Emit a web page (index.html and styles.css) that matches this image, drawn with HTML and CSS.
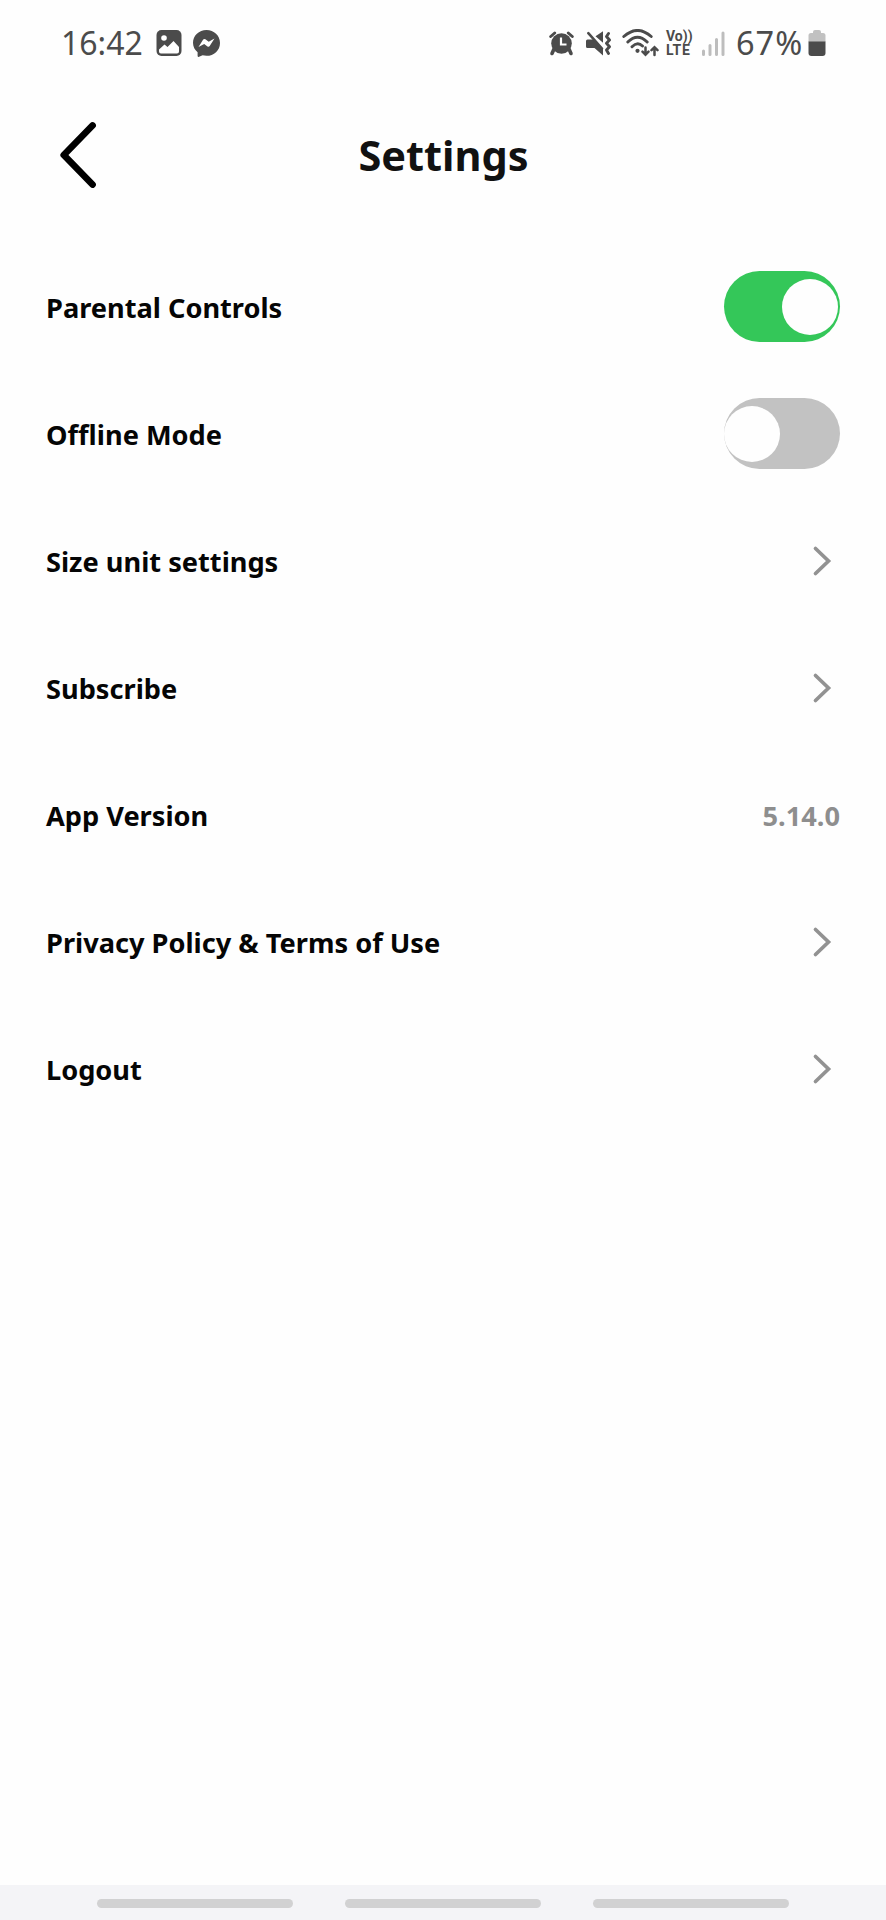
FILE: index.html
```html
<!DOCTYPE html>
<html lang="en">
<head>
<meta charset="utf-8">
<title>Settings</title>
<link rel="stylesheet" href="styles.css">
</head>
<body>
<div class="screen">
  <div class="status">
    <span class="clock">16:42</span>
    <svg class="ic-photo" width="26" height="26" viewBox="0 0 26 26"><rect x=".5" y="0" width="25" height="26" rx="5" fill="#4b4b4b"/><circle cx="8" cy="8" r="2.8" fill="#fff"/><path d="M3 19.500l5.500-5 3 2.500 6-6 5.500 6v4.500q0 2-2 2h-16q-2 0-2-2z" fill="#fff"/></svg>
    <svg class="ic-msg" width="27" height="27" viewBox="0 0 27 27"><path d="M13.500 0C6 0 0 5.500 0 12.800c0 4 1.800 7.200 4.600 9.500V26q.2 1.300 1.500.8l3.500-1.500c1.200.3 2.500.5 3.900.5C21 25.800 27 20.300 27 12.900S21 0 13.500 0z" fill="#4b4b4b"/><path d="M5.500 17l4.700-7.500q1-1 2.200-.3l3.300 2.600 5.800-3.300-4.800 7.500q-.9 1.200-2.200.4l-3.300-2.500z" fill="#fff"/></svg>
    <span class="spacer"></span>
    <svg class="ic-alarm" width="25" height="25" viewBox="0 0 25 25"><path d="M1.700 5.500l4-3.500M23.300 5.500l-4-3.500" stroke="#4b4b4b" stroke-width="2.900" stroke-linecap="round"/><circle cx="12.500" cy="12.500" r="10.300" fill="#4b4b4b"/><path d="M5 18l-2 4.500M20 18l2 4.500" stroke="#4b4b4b" stroke-width="3.600" stroke-linecap="round"/><path d="M12 6.500v7h5.500" fill="none" stroke="#fff" stroke-width="2.200"/></svg>
    <svg class="ic-mute" width="25" height="25" viewBox="0 0 25 25"><path d="M9.500 5.300L17 .3v11.500zM1.500 8.500H7.500L17 18v6.500L8.500 17H1.500Q0 17 0 15.500v-5.500q0-1.500 1.500-1.500z" fill="#4b4b4b"/><path d="M2.300 2.200L16 17.500" stroke="#4b4b4b" stroke-width="2.600" stroke-linecap="round"/><path d="M22.500 2.500l-2 3 3 3.500-3 3.200 3 3.500-3 3.300 2 3.500" fill="none" stroke="#4b4b4b" stroke-width="2.900" stroke-linecap="round" stroke-linejoin="round"/></svg>
    <svg class="ic-wifi" width="37" height="28" viewBox="0 0 37 28"><g fill="none" stroke="#4b4b4b" stroke-width="2.900" stroke-linecap="round"><path d="M1.800 7.500Q15.500-4.600 29.200 7.500M5.800 13Q15.500 3.500 25.200 13M10 17.800Q15.500 12.200 20.500 17"/><path d="M23.500 18.500v7M20.500 22.700l3 3 3-3M32.500 26v-7M29.500 21.200l3-3 3 3" stroke-width="2.500"/></g><circle cx="15.500" cy="21.800" r="2.100" fill="#4b4b4b"/></svg>
    <span class="volte"><span class="vo">Vo))</span><span class="lte">LTE</span></span>
    <svg class="ic-signal" width="23" height="25" viewBox="0 0 23 25"><path d="M1.500 20v3.500M8 14.500v9M14.500 8.500v15M21 2v21.500" stroke="#bdbdbd" stroke-width="3" stroke-linecap="round"/></svg>
    <span class="pct">67%</span>
    <svg class="ic-batt" width="18" height="26" viewBox="0 0 18 26"><path d="M5 2q0-2 2-2h4q2 0 2 2v1h2q2.500 0 2.500 2.500V12H.5V5.500Q.5 3 3 3h2z" fill="#c1c1c1"/><path d="M.5 11.500h17v11.500q0 3-3 3h-11q-3 0-3-3z" fill="#4b4b4b"/></svg>
  </div>
  <header class="header">
    <svg class="back" width="40" height="68" viewBox="0 0 40 68"><path d="M34.500 4.500L5.800 34 34.500 63.500" fill="none" stroke="#000" stroke-width="6.800" stroke-linecap="round" stroke-linejoin="round"/></svg>
    <h1 class="title">Settings</h1>
  </header>
  <main class="list">
    <div class="row"><span class="label">Parental Controls</span><span class="toggle on"><i class="knob"></i></span></div>
    <div class="row"><span class="label">Offline Mode</span><span class="toggle"><i class="knob"></i></span></div>
    <div class="row"><span class="label">Size unit settings</span><svg class="chev" width="20" height="32" viewBox="0 0 20 32"><path d="M3.500 3.500L16.500 16 3.500 28.500"/></svg></div>
    <div class="row"><span class="label">Subscribe</span><svg class="chev" width="20" height="32" viewBox="0 0 20 32"><path d="M3.500 3.500L16.500 16 3.500 28.500"/></svg></div>
    <div class="row"><span class="label">App Version</span><span class="label version">5.14.0</span></div>
    <div class="row"><span class="label">Privacy Policy &amp; Terms of Use</span><svg class="chev" width="20" height="32" viewBox="0 0 20 32"><path d="M3.500 3.500L16.500 16 3.500 28.500"/></svg></div>
    <div class="row"><span class="label">Logout</span><svg class="chev" width="20" height="32" viewBox="0 0 20 32"><path d="M3.500 3.500L16.500 16 3.500 28.500"/></svg></div>
  </main>
  <nav class="nav"><i class="pill"></i><i class="pill"></i><i class="pill"></i></nav>
</div>
</body>
</html>
```
FILE: styles.css
```css
* { box-sizing: border-box; }
body { margin: 0; background: #fefefe; font-family: "Noto Sans", sans-serif; color: #050505; }
.screen { width: 886px; height: 1920px; display: flex; flex-direction: column; }
.status { height: 86px; padding: 0 60px 0 61px; display: flex; align-items: center; color: #4b4b4b; flex: none; }
.status > * { flex-shrink: 0; }
.clock { font-size: 32px; line-height: 40px; width: 95px; letter-spacing: 0; }
.ic-msg { margin-left: 11px; }
.spacer { flex: 1; }
.ic-mute { margin-left: 12px; }
.ic-wifi { margin-left: 11px; }
.volte { display: flex; flex-direction: column; margin-left: 7px; width: 27px; font-family: Roboto, sans-serif; font-size: 14px; font-weight: 700; line-height: 14px; }
.lte { letter-spacing: 0.6px; }
.ic-signal { margin-left: 9px; }
.pct { font-size: 32.500px; line-height: 40px; width: 72px; margin-left: 11px; letter-spacing: 1px; }
.header { height: 157px; padding-left: 58px; display: grid; grid-template-columns: 40px 1fr 97px; align-items: start; flex: none; }
.back { margin-top: 35px; }
.title { margin: 35px 0 0; font-size: 41.500px; line-height: 68px; font-weight: 700; text-align: center; color: #111; }
.list { padding: 0 46px; flex: 1; }
.row { height: 127px; display: flex; align-items: center; justify-content: space-between; font-size: 27.200px; font-weight: 700; line-height: 38px; white-space: nowrap; }
.label { padding-top: 2px; }
.toggle { width: 116px; height: 71px; border-radius: 36px; background: #c2c2c2; display: flex; align-items: center; }
.on { background: #34c759; justify-content: flex-end; padding-right: 2.500px; }
.knob { width: 56px; height: 56px; border-radius: 50%; background: #fefefe; }
.chev { margin-right: 8px; }
.chev path { fill: none; stroke: #929292; stroke-width: 3.700; stroke-linecap: round; }
.version { color: #8e8e8e; }
.nav { height: 35px; background: #f4f4f7; display: flex; justify-content: center; gap: 52px; padding-top: 13.500px; flex: none; }
.pill { width: 196px; height: 9px; border-radius: 5px; background: #d1d1d2; }
```
